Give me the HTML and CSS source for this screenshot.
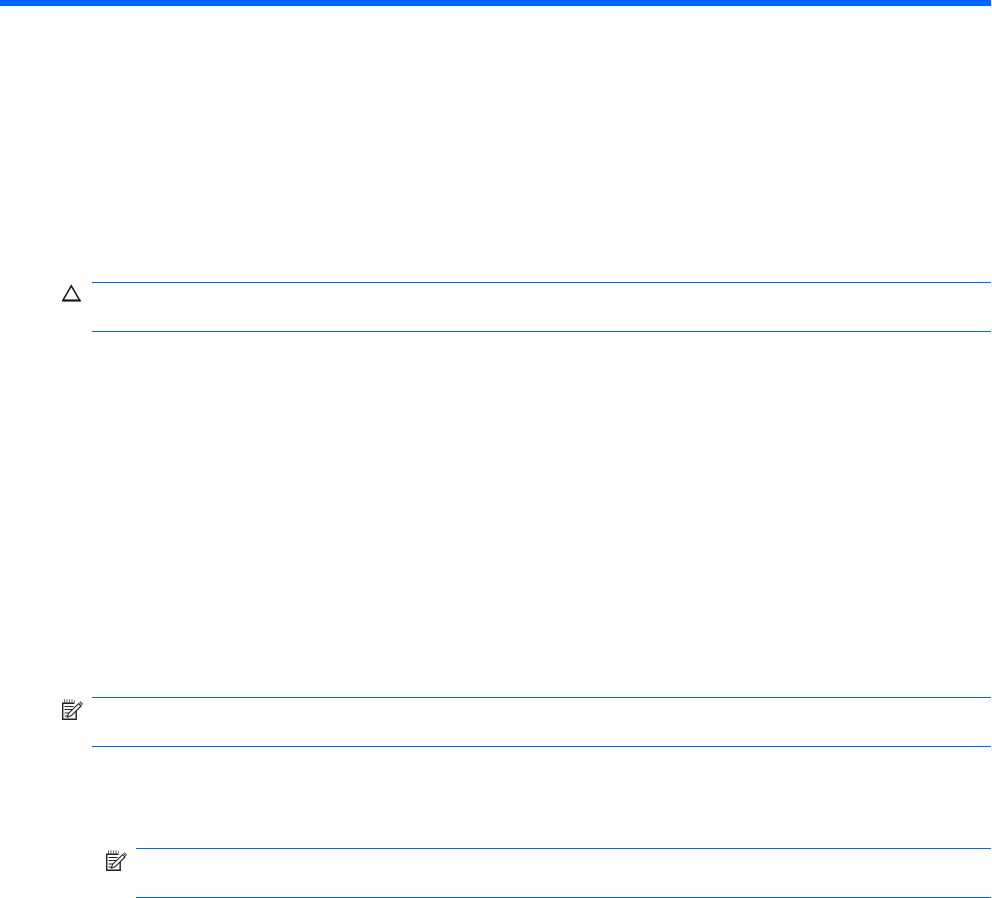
FILE: index.html
```html
<!DOCTYPE html>
<html lang="en">
<head>
<meta charset="utf-8">
<title>Page</title>
<link rel="stylesheet" href="styles.css">
</head>
<body>
<div class="topbar"></div>
<div class="note note-caution">
  <div class="note-icon">
    <svg width="22" height="20" viewBox="0 0 22 20"><path d="M10.3 2.8 L18.6 17.2 H2 Z" fill="none" stroke="#1a1a1a" stroke-width="1.6"/><path d="M1.1 17.7H19.7" stroke="#1a1a1a" stroke-width="1.8"/></svg>
  </div>
  <div class="note-body"></div>
</div>
<div class="note note-first">
  <div class="note-icon">
    <svg width="23" height="24" viewBox="0 0 23 24"><g fill="none" stroke="#222"><path d="M15.2 11V21.3H1.7V5.2H13.5" stroke-width="1.4"/><path d="M3.5 1.5V4.5M6 1.5V4.5M8.5 1.5V4.5M11 1.5V4.5M13.5 2.5V4.5" stroke-width="1" stroke-dasharray="1.2 .6"/><path d="M3.5 8.5H12.5M3.5 11.5H11M3.5 15H8M3.5 18H6.5" stroke-width="1"/><path d="M6.2 19.2L7.6 15.4L17.6 5.6L20 8L10 17.8Z" fill="#fff" stroke-width="1.1" stroke-linejoin="round"/><path d="M18.4 4.7L19.6 3.6L21.8 5.8L20.7 7Z" fill="#888" stroke="#666" stroke-width=".8"/></g></svg>
  </div>
  <div class="note-body"></div>
</div>
<div class="note note-nested">
  <div class="note-icon">
    <svg width="23" height="24" viewBox="0 0 23 24"><g fill="none" stroke="#222"><path d="M15.2 11V21.3H1.7V5.2H13.5" stroke-width="1.4"/><path d="M3.5 1.5V4.5M6 1.5V4.5M8.5 1.5V4.5M11 1.5V4.5M13.5 2.5V4.5" stroke-width="1" stroke-dasharray="1.2 .6"/><path d="M3.5 8.5H12.5M3.5 11.5H11M3.5 15H8M3.5 18H6.5" stroke-width="1"/><path d="M6.2 19.2L7.6 15.4L17.6 5.6L20 8L10 17.8Z" fill="#fff" stroke-width="1.1" stroke-linejoin="round"/><path d="M18.4 4.7L19.6 3.6L21.8 5.8L20.7 7Z" fill="#888" stroke="#666" stroke-width=".8"/></g></svg>
  </div>
  <div class="note-body"></div>
</div>
</body>
</html>
```
FILE: styles.css
```css
html, body {
  margin: 0;
  padding: 0;
  background: #fff;
}
body {
  width: 992px;
  height: 898px;
  overflow: hidden;
  font-family: "Liberation Sans", sans-serif;
}
.topbar {
  width: 991px;
  height: 6px;
  background: #0066ff;
}
.note {
  display: flex;
  width: 991px;
  box-sizing: border-box;
}
.note-caution {
  margin-top: 276px;
  padding-left: 61px;
}
.note-first {
  margin-top: 365px;
  padding-left: 61px;
}
.note-nested {
  margin-top: 101px;
  padding-left: 105px;
}
.note-icon {
  width: 31px;
  flex: none;
  padding-top: 1px;
}
.note-icon svg {
  display: block;
}
.note-body {
  flex: 1;
  height: 48px;
  border-top: 1px solid #0066ff;
  border-bottom: 1px solid #0066ff;
}
```
